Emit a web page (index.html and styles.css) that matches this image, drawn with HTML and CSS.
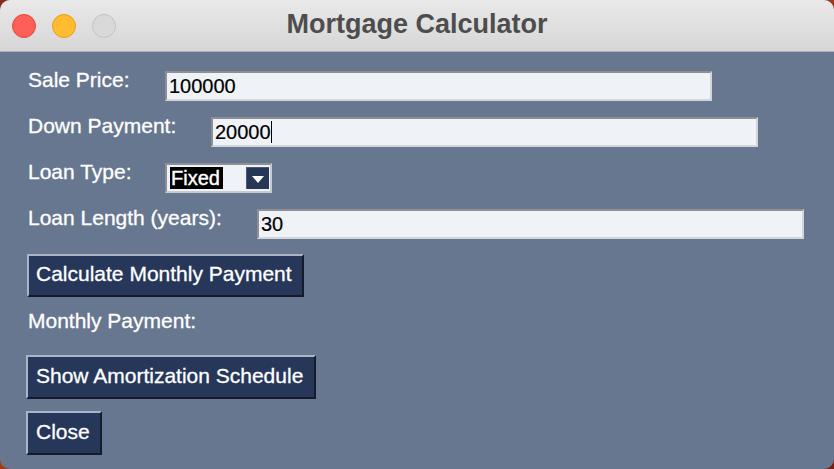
FILE: index.html
```html
<!DOCTYPE html>
<html>
<head>
<meta charset="utf-8">
<title>Mortgage Calculator</title>
<link rel="stylesheet" href="styles.css">
</head>
<body>
<div class="window">
  <header class="titlebar">
    <div class="lights">
      <span class="light red"></span>
      <span class="light yellow"></span>
      <span class="light grey"></span>
    </div>
    <div class="title">Mortgage Calculator</div>
    <div></div>
  </header>
  <main class="content">
    <div class="row">
      <label class="label w-sale">Sale Price:</label>
      <div class="entry">100000</div>
    </div>
    <div class="row">
      <label class="label w-down">Down Payment:</label>
      <div class="entry">20000<span class="cursor"></span></div>
    </div>
    <div class="row">
      <label class="label w-type">Loan Type:</label>
      <div class="select">
        <span class="select-value">Fixed</span>
        <span class="select-arrow">
          <svg width="12" height="7" viewBox="0 0 12 7"><path d="M0 0 H12 L6 7 Z" fill="#ffffff"/></svg>
        </span>
      </div>
    </div>
    <div class="row">
      <label class="label w-length">Loan Length (years):</label>
      <div class="entry">30</div>
    </div>
    <button class="btn btn-calc">Calculate Monthly Payment</button>
    <div class="label result">Monthly Payment:</div>
    <button class="btn btn-sched">Show Amortization Schedule</button>
    <button class="btn btn-close">Close</button>
  </main>
</div>
</body>
</html>
```

FILE: styles.css
```css
html, body {
  margin: 0;
  padding: 0;
}
body {
  width: 834px;
  height: 469px;
  background: linear-gradient(135deg, #8a2a18 0%, #a8441e 50%, #7a1c14 100%);
  font-family: "Liberation Sans", Arial, sans-serif;
  overflow: hidden;
}
.window {
  width: 834px;
  height: 469px;
  border-radius: 10px;
  overflow: hidden;
  background: #66778f;
  display: flex;
  flex-direction: column;
}
.titlebar {
  height: 51px;
  flex: none;
  background: linear-gradient(#e9e9e9, #d6d6d6);
  border-bottom: 1px solid #b3b3b3;
  display: grid;
  grid-template-columns: 1fr auto 1fr;
  align-items: center;
}
.lights {
  display: flex;
  gap: 16px;
  padding-left: 12px;
}
.light {
  width: 24px;
  height: 24px;
  border-radius: 50%;
  box-sizing: border-box;
}
.red { background: #fe5f57; border: 1px solid #e2463f; }
.yellow { background: #febc2e; border: 1px solid #e1a116; }
.grey { background: #d9d9d9; border: 1px solid #c3c3c3; }
.title {
  font-weight: bold;
  font-size: 27px;
  color: #4d4d4d;
  padding-bottom: 2px;
}
.content {
  display: flex;
  flex-direction: column;
  align-items: flex-start;
  padding: 19px 0 0 26px;
}
.row {
  display: flex;
  align-items: flex-start;
  height: 30px;
  margin-bottom: 16px;
}
.label {
  color: #ffffff;
  font-size: 21px;
  line-height: 24px;
  margin-left: 2px;
  margin-top: -3px;
  -webkit-text-stroke: 0.3px #ffffff;
}
.w-sale { width: 137px; }
.w-down { width: 183px; }
.w-type { width: 137px; }
.w-length { width: 229px; }
.entry {
  width: 547px;
  height: 30px;
  box-sizing: border-box;
  background: #eff2f7;
  border-style: solid;
  border-width: 2px;
  border-color: #8d8f93 #d1d5dc #d1d5dc #8d8f93;
  font-size: 20px;
  line-height: 26px;
  padding-left: 2px;
  color: #000000;
  display: flex;
  align-items: center;
  -webkit-text-stroke: 0.2px #000000;
}
.cursor {
  display: inline-block;
  width: 0;
  height: 22px;
  border-left: 1px solid #000000;
}
.select {
  width: 107px;
  height: 30px;
  box-sizing: border-box;
  background: #eff2f7;
  border-style: solid;
  border-width: 2px;
  border-color: #8d8f93 #c6cad2 #c6cad2 #8d8f93;
  display: flex;
  align-items: center;
  padding-left: 3px;
}
.select-value {
  background: #000000;
  color: #ffffff;
  font-size: 20px;
  line-height: 22px;
  width: 53px;
  padding-left: 1px;
  box-sizing: border-box;
  -webkit-text-stroke: 0.4px #ffffff;
}
.select-arrow {
  margin-left: 23px;
  width: 23px;
  height: 22px;
  background: #263657;
  border-top: 1px solid #4a5874;
  border-left: 1px solid #4a5874;
  box-sizing: border-box;
  display: flex;
  align-items: center;
  justify-content: center;
  padding-top: 1px;
}
.btn {
  font-family: "Liberation Sans", Arial, sans-serif;
  font-size: 21px;
  color: #ffffff;
  background: #26375a;
  border-style: solid;
  border-width: 2px;
  border-color: #aab4c4 #141c2b #141c2b #aab4c4;
  box-sizing: border-box;
  height: 44px;
  padding: 0 0 3px 8px;
  text-align: left;
  margin: 0;
  display: flex;
  align-items: center;
  -webkit-text-stroke: 0.3px #ffffff;
}
.btn-calc {
  width: 277px;
  height: 43px;
  margin-top: -1px;
  margin-left: 1px;
  padding-left: 7px;
}
.result {
  margin-top: 12px;
  margin-bottom: 22px;
}
.btn-sched {
  width: 290px;
}
.btn-close {
  width: 76px;
  margin-top: 12px;
}
```
